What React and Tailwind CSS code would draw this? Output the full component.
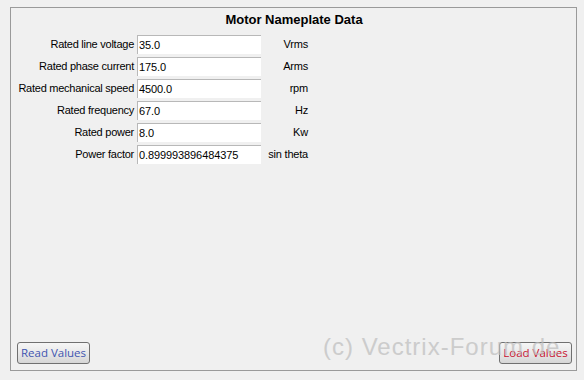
const rows = [
  { label: "Rated line voltage", value: "35.0", unit: "Vrms" },
  { label: "Rated phase current", value: "175.0", unit: "Arms" },
  { label: "Rated mechanical speed", value: "4500.0", unit: "rpm" },
  { label: "Rated frequency", value: "67.0", unit: "Hz" },
  { label: "Rated power", value: "8.0", unit: "Kw" },
  { label: "Power factor", value: "0.899993896484375", unit: "sin theta" },
];

function WinButton({ children, color }) {
  return (
    <button
      type="button"
      className={`h-[22px] w-[73px] rounded-[3px] border border-[#707070] bg-gradient-to-b from-[#f6f6f6] via-[#e8e8e8] to-[#d6d6d6] text-[11.5px] leading-none ${color}`}
      style={{ fontFamily: '"Open Sans", "DejaVu Sans", sans-serif' }}
    >
      {children}
    </button>
  );
}

export default function App() {
  return (
    <div
      className="relative w-[584px] h-[380px] bg-[#f0f0f0] pt-[7px] pl-[10px]"
      style={{ fontFamily: '"Liberation Sans", Arial, sans-serif' }}
    >
      {/* Panel */}
      <div className="flex flex-col w-[567px] h-[364px] border border-[#9a9a9a]">
        <div className="text-center text-[13px] font-bold text-black leading-none mt-[5px] ml-[1px]">
          Motor Nameplate Data
        </div>

        <div className="grid grid-cols-[123px_124px_44px] gap-x-[3px] gap-y-[3px] mt-[9px] text-[11px] text-black">
          {rows.map((r) => (
            <div key={r.label} className="contents">
              <div className="flex items-center justify-end h-[19px] whitespace-nowrap tracking-[-0.25px]">
                {r.label}
              </div>
              <div className="flex items-center h-[19px] bg-white border-l border-t border-[#b8b8b8] pl-[1px] tracking-[-0.1px]">
                {r.value}
              </div>
              <div className="flex items-center justify-end h-[19px] -ml-[2px] whitespace-nowrap tracking-[-0.2px]">
                {r.unit}
              </div>
            </div>
          ))}
        </div>

        <div className="mt-auto flex justify-between pl-[6px] pr-[4px] pb-[6px]">
          <WinButton color="text-[#3f55b0]">Read Values</WinButton>
          <WinButton color="text-[#c8102e]">Load Values</WinButton>
        </div>
      </div>

      {/* Watermark */}
      <div className="absolute left-[323px] top-[335px] text-[24px] tracking-[1px] leading-none text-[#bdbdbd] opacity-70 pointer-events-none whitespace-nowrap">
        (c) Vectrix-Forum.de
      </div>
    </div>
  );
}
